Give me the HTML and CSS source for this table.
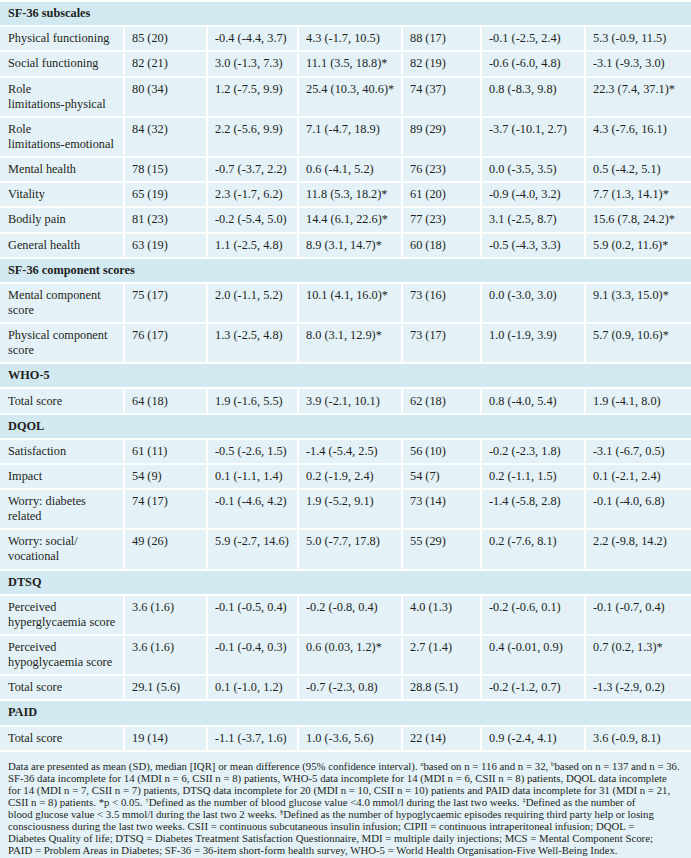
FILE: index.html
```html
<!DOCTYPE html>
<html lang="en">
<head>
<meta charset="utf-8">
<title>SF-36 subscales table</title>
<link rel="stylesheet" href="styles.css">
</head>
<body>
<table class="results">
  <colgroup>
    <col class="c1"><col class="c2"><col class="c3"><col class="c4"><col class="c5"><col class="c6"><col class="c7">
  </colgroup>
  <tbody>
    <tr class="section"><td colspan="7">SF-36 subscales</td></tr>
    <tr><td>Physical functioning</td><td>85 (20)</td><td>-0.4 (-4.4, 3.7)</td><td>4.3 (-1.7, 10.5)</td><td>88 (17)</td><td>-0.1 (-2.5, 2.4)</td><td>5.3 (-0.9, 11.5)</td></tr>
    <tr><td>Social functioning</td><td>82 (21)</td><td>3.0 (-1.3, 7.3)</td><td>11.1 (3.5, 18.8)*</td><td>82 (19)</td><td>-0.6 (-6.0, 4.8)</td><td>-3.1 (-9.3, 3.0)</td></tr>
    <tr><td>Role <span class="nw">limitations-physical</span></td><td>80 (34)</td><td>1.2 (-7.5, 9.9)</td><td>25.4 (10.3, 40.6)*</td><td>74 (37)</td><td>0.8 (-8.3, 9.8)</td><td>22.3 (7.4, 37.1)*</td></tr>
    <tr><td>Role <span class="nw">limitations-emotional</span></td><td>84 (32)</td><td>2.2 (-5.6, 9.9)</td><td>7.1 (-4.7, 18.9)</td><td>89 (29)</td><td>-3.7 (-10.1, 2.7)</td><td>4.3 (-7.6, 16.1)</td></tr>
    <tr><td>Mental health</td><td>78 (15)</td><td>-0.7 (-3.7, 2.2)</td><td>0.6 (-4.1, 5.2)</td><td>76 (23)</td><td>0.0 (-3.5, 3.5)</td><td>0.5 (-4.2, 5.1)</td></tr>
    <tr><td>Vitality</td><td>65 (19)</td><td>2.3 (-1.7, 6.2)</td><td>11.8 (5.3, 18.2)*</td><td>61 (20)</td><td>-0.9 (-4.0, 3.2)</td><td>7.7 (1.3, 14.1)*</td></tr>
    <tr><td>Bodily pain</td><td>81 (23)</td><td>-0.2 (-5.4, 5.0)</td><td>14.4 (6.1, 22.6)*</td><td>77 (23)</td><td>3.1 (-2.5, 8.7)</td><td>15.6 (7.8, 24.2)*</td></tr>
    <tr><td>General health</td><td>63 (19)</td><td>1.1 (-2.5, 4.8)</td><td>8.9 (3.1, 14.7)*</td><td>60 (18)</td><td>-0.5 (-4.3, 3.3)</td><td>5.9 (0.2, 11.6)*</td></tr>
    <tr class="section"><td colspan="7">SF-36 component scores</td></tr>
    <tr><td>Mental component score</td><td>75 (17)</td><td>2.0 (-1.1, 5.2)</td><td>10.1 (4.1, 16.0)*</td><td>73 (16)</td><td>0.0 (-3.0, 3.0)</td><td>9.1 (3.3, 15.0)*</td></tr>
    <tr><td>Physical component score</td><td>76 (17)</td><td>1.3 (-2.5, 4.8)</td><td>8.0 (3.1, 12.9)*</td><td>73 (17)</td><td>1.0 (-1.9, 3.9)</td><td>5.7 (0.9, 10.6)*</td></tr>
    <tr class="section"><td colspan="7">WHO-5</td></tr>
    <tr><td>Total score</td><td>64 (18)</td><td>1.9 (-1.6, 5.5)</td><td>3.9 (-2.1, 10.1)</td><td>62 (18)</td><td>0.8 (-4.0, 5.4)</td><td>1.9 (-4.1, 8.0)</td></tr>
    <tr class="section"><td colspan="7">DQOL</td></tr>
    <tr><td>Satisfaction</td><td>61 (11)</td><td>-0.5 (-2.6, 1.5)</td><td>-1.4 (-5.4, 2.5)</td><td>56 (10)</td><td>-0.2 (-2.3, 1.8)</td><td>-3.1 (-6.7, 0.5)</td></tr>
    <tr><td>Impact</td><td>54 (9)</td><td>0.1 (-1.1, 1.4)</td><td>0.2 (-1.9, 2.4)</td><td>54 (7)</td><td>0.2 (-1.1, 1.5)</td><td>0.1 (-2.1, 2.4)</td></tr>
    <tr><td>Worry: diabetes related</td><td>74 (17)</td><td>-0.1 (-4.6, 4.2)</td><td>1.9 (-5.2, 9.1)</td><td>73 (14)</td><td>-1.4 (-5.8, 2.8)</td><td>-0.1 (-4.0, 6.8)</td></tr>
    <tr><td>Worry: social/ vocational</td><td>49 (26)</td><td>5.9 (-2.7, 14.6)</td><td>5.0 (-7.7, 17.8)</td><td>55 (29)</td><td>0.2 (-7.6, 8.1)</td><td>2.2 (-9.8, 14.2)</td></tr>
    <tr class="section"><td colspan="7">DTSQ</td></tr>
    <tr><td>Perceived <span class="nw">hyperglycaemia score</span></td><td>3.6 (1.6)</td><td>-0.1 (-0.5, 0.4)</td><td>-0.2 (-0.8, 0.4)</td><td>4.0 (1.3)</td><td>-0.2 (-0.6, 0.1)</td><td>-0.1 (-0.7, 0.4)</td></tr>
    <tr><td>Perceived <span class="nw">hypoglycaemia score</span></td><td>3.6 (1.6)</td><td>-0.1 (-0.4, 0.3)</td><td>0.6 (0.03, 1.2)*</td><td>2.7 (1.4)</td><td>0.4 (-0.01, 0.9)</td><td>0.7 (0.2, 1.3)*</td></tr>
    <tr><td>Total score</td><td>29.1 (5.6)</td><td>0.1 (-1.0, 1.2)</td><td>-0.7 (-2.3, 0.8)</td><td>28.8 (5.1)</td><td>-0.2 (-1.2, 0.7)</td><td>-1.3 (-2.9, 0.2)</td></tr>
    <tr class="section"><td colspan="7">PAID</td></tr>
    <tr><td>Total score</td><td>19 (14)</td><td>-1.1 (-3.7, 1.6)</td><td>1.0 (-3.6, 5.6)</td><td>22 (14)</td><td>0.9 (-2.4, 4.1)</td><td>3.6 (-0.9, 8.1)</td></tr>
  </tbody>
  <tfoot>
    <tr class="note"><td colspan="7">Data are presented as mean (SD), median [IQR] or mean difference (95% confidence interval). <sup>a</sup>based on n = 116 and n = 32, <sup>b</sup>based on n = 137 and n = 36.<br>SF-36 data incomplete for 14 (MDI n = 6, CSII n = 8) patients, WHO-5 data incomplete for 14 (MDI n = 6, CSII n = 8) patients, DQOL data incomplete<br>for 14 (MDI n = 7, CSII n = 7) patients, DTSQ data incomplete for 20 (MDI n = 10, CSII n = 10) patients and PAID data incomplete for 31 (MDI n = 21,<br>CSII n = 8) patients. *p &lt; 0.05. <sup>†</sup>Defined as the number of blood glucose value &lt;4.0 mmol/l during the last two weeks. <sup>‡</sup>Defined as the number of<br>blood glucose value &lt; 3.5 mmol/l during the last two 2 weeks. <sup>§</sup>Defined as the number of hypoglycaemic episodes requiring third party help or losing<br>consciousness during the last two weeks. CSII = continuous subcutaneous insulin infusion; CIPII = continuous intraperitoneal infusion; DQOL =<br>Diabetes Quality of life; DTSQ = Diabetes Treatment Satisfaction Questionnaire, MDI = multiple daily injections; MCS = Mental Component Score;<br>PAID = Problem Areas in Diabetes; SF-36 = 36-item short-form health survey, WHO-5 = World Health Organisation-Five Well-Being Index.</td></tr>
  </tfoot>
</table>
</body>
</html>
```
FILE: styles.css
```css
html, body {
  margin: 0;
  padding: 0;
  background: #ffffff;
}

body {
  font-family: "Liberation Serif", "Times New Roman", serif;
  color: #231f20;
}

.results {
  width: 691px;
  table-layout: fixed;
  border-collapse: collapse;
}

.c1 { width: 124px; }
.c2 { width: 83px; }
.c3 { width: 91px; }
.c4 { width: 104px; }
.c5 { width: 79px; }
.c6 { width: 104px; }
.c7 { width: 106px; }

.results td {
  background: #e4f2f8;
  border: 2px solid #ffffff;
  padding: 4.1px 2px 4.1px 7px;
  font-size: 12.3px;
  line-height: 15px;
  vertical-align: top;
  white-space: nowrap;
}

.results tr td:first-child {
  border-left: 0;
  padding-left: 8px;
  white-space: normal;
}

.results tr td:last-child {
  border-right: 0;
}

.nw {
  white-space: nowrap;
}

.results .section td {
  background: #d2e9f1;
  font-weight: bold;
}

.results .note td {
  font-size: 10.8px;
  line-height: 12px;
  padding: 8px 8px 6px 8px;
  white-space: nowrap;
  border-bottom: 0;
}

.results sup {
  font-size: 7px;
  line-height: 0;
  vertical-align: 4px;
}
```
